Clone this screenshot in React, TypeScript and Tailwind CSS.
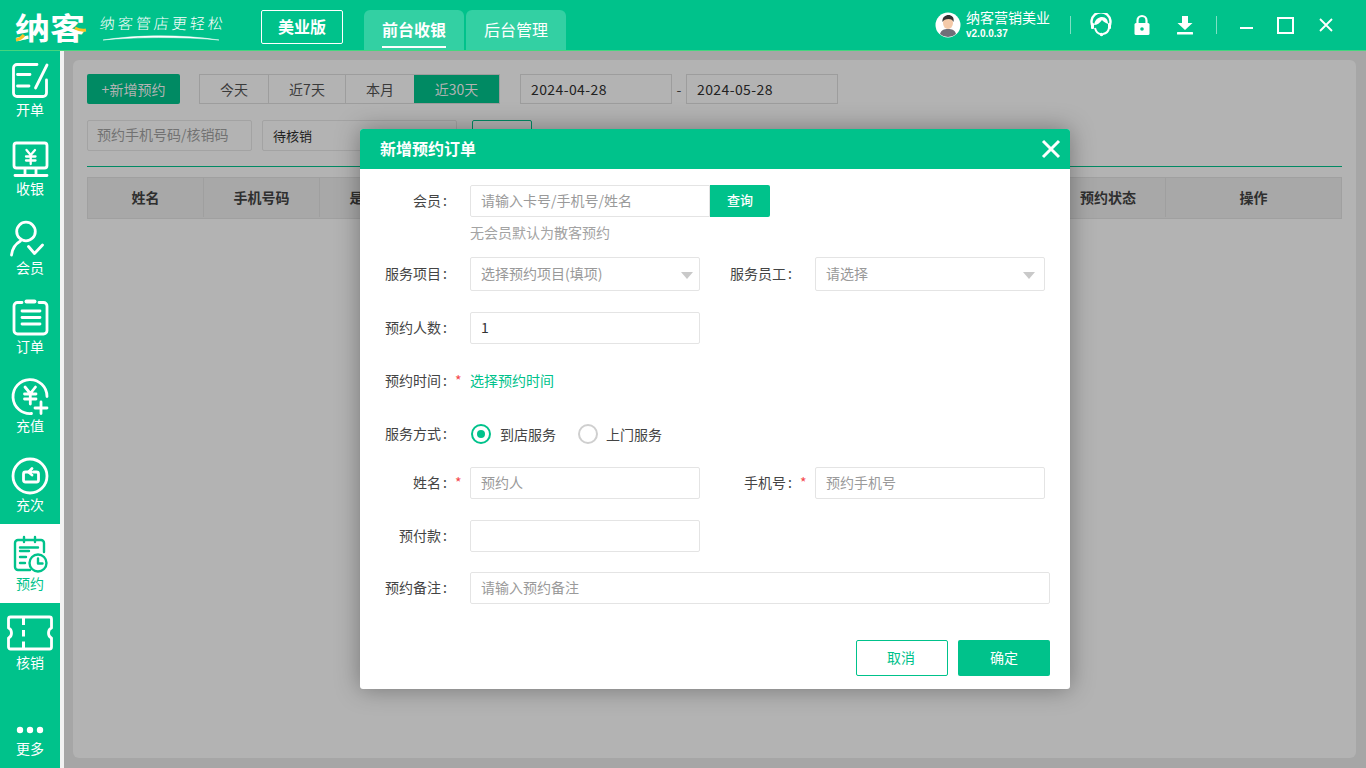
import { ReactNode } from "react";

const W = { fill: "none", stroke: "#fff", strokeWidth: 2.8, strokeLinecap: "round", strokeLinejoin: "round" } as const;
const G = { fill: "none", stroke: "#00c28b", strokeWidth: 2.4, strokeLinecap: "round", strokeLinejoin: "round" } as const;

const navItems: { label: string; icon: ReactNode; active?: boolean }[] = [
  {
    label: "开单",
    icon: (
      <g {...W}>
        <path d="M37 14.500H17a3.500 3.500 0 0 0-3.500 3.500V43a3.500 3.500 0 0 0 3.500 3.500H43a3.500 3.500 0 0 0 3.500-3.500V30" />
        <path d="M17.500 24.500H30M17.500 36H29M47 15 35.500 38" />
      </g>
    ),
  },
  {
    label: "收银",
    icon: (
      <g {...W}>
        <rect x="14" y="14" width="33" height="25" rx="2.500" />
        <path d="M25 40v6M36 40v6M15 46.500h32" />
        <path d="m26.500 21 4.200 5 4.300-5M26 27.500h9.500M26 31.500h9.500M30.700 26v9" strokeWidth="2.300" />
      </g>
    ),
  },
  {
    label: "会员",
    icon: (
      <g {...W}>
        <circle cx="26" cy="23.500" r="9.300" />
        <path d="M11.500 47c.8-6.800 4.500-11.500 9-14M28.500 38.500l6 7 8-8.500" />
      </g>
    ),
  },
  {
    label: "订单",
    icon: (
      <g {...W}>
        <path d="M22 15.500h-4.500a3.500 3.500 0 0 0-3.500 3.500v24.500a3.500 3.500 0 0 0 3.500 3.500h26a3.500 3.500 0 0 0 3.500-3.500V19a3.500 3.500 0 0 0-3.500-3.500H39" />
        <path d="M26.500 14.500h8" strokeWidth="4" />
        <path d="M22 24h18M22 30.500h18M22 37h18" />
      </g>
    ),
  },
  {
    label: "充值",
    icon: (
      <g {...W}>
        <path d="M47 30.500a17 17 0 1 0-15.500 17" />
        <path d="m25 21 5.300 6.500 5.200-6.500M24.500 28h11.500M24.500 33h11.500M30.300 28v10" />
        <path d="M41 36v11.500M35 42h12" strokeWidth="2.800" />
      </g>
    ),
  },
  {
    label: "充次",
    icon: (
      <g {...W}>
        <circle cx="30" cy="31" r="17" />
        <path d="M33.500 27h3a2 2 0 0 1 2 2v6a2 2 0 0 1-2 2h-11a2 2 0 0 1-2-2v-6a2 2 0 0 1 2-2H31" />
        <path d="m32 23.500-3.500 3.500 3.500 3" />
      </g>
    ),
  },
  {
    label: "预约",
    active: true,
    icon: (
      <g {...G}>
        <path d="M30 46H18a3 3 0 0 1-3-3V19a3 3 0 0 1 3-3h23a3 3 0 0 1 3 3v9" />
        <path d="M24 13v5M35 13v5M20 23.500h18M20 27h9M20 33h6M20 39h5" />
        <circle cx="38" cy="39" r="8.500" />
        <path d="M38 34.500V39.500h4.500" />
      </g>
    ),
  },
  {
    label: "核销",
    icon: (
      <g {...W}>
        <path d="M10.500 14h39a2 2 0 0 1 2 2v9c-2 .8-3 2.800-3 5s1 4.200 3 5v9a2 2 0 0 1-2 2h-39a2 2 0 0 1-2-2v-9c2-.8 3-2.800 3-5s-1-4.200-3-5v-9a2 2 0 0 1 2-2Z" />
        <path d="M23.500 15v7M23.500 27v6.500M23.500 38.500V45" strokeWidth="3" strokeLinecap="butt" />
      </g>
    ),
  },
];

function NavItem({ label, icon, active }: { label: string; icon: ReactNode; active?: boolean }) {
  return (
    <div className={active ? "h-[79px] w-[60px] bg-white text-[#00c28b]" : "h-[79px] w-[60px] text-white"}>
      <svg width="60" height="50" viewBox="0 0 60 50" className="block">
        {icon}
      </svg>
      <div className="-mt-px text-center text-[14px] leading-[20px]">{label}</div>
    </div>
  );
}

function Field({ placeholder, className, value }: { placeholder?: string; className: string; value?: string }) {
  return (
    <input
      readOnly
      placeholder={placeholder}
      defaultValue={value}
      className={`rounded-[2px] border border-[#e4e4e4] bg-white pb-[2px] pl-[10px] pr-[9px] text-[14px] text-[#333] outline-none placeholder:text-[#9a9a9a] ${className}`}
    />
  );
}

function Select({ text, className }: { text: string; className: string }) {
  return (
    <div className={`flex h-[34px] w-[230px] items-center justify-between rounded-[2px] border border-[#e4e4e4] bg-white pb-[2px] pl-[10px] text-[14px] text-[#999] ${className}`}>
      <span>{text}</span>
      <span className="mt-[4px] h-0 w-0 border-x-[6px] border-t-[7px] border-x-transparent border-t-[#c9c9c9]" />
    </div>
  );
}

function Label({ text, star }: { text: string; star?: boolean }) {
  return (
    <div className="flex w-[85px] shrink-0 items-center pb-[2px] text-[14px] text-[#444]">
      <span className="flex w-[62px] justify-end whitespace-nowrap">
        {text}
        <span className="ml-[2px] w-[4px]">:</span>
      </span>
      {star && <span className="ml-[8px] text-[#f5474b]">*</span>}
    </div>
  );
}

function Modal() {
  return (
    <div className="absolute left-[360px] top-[129px] flex h-[560px] w-[710px] flex-col overflow-hidden rounded-[3px] bg-white shadow-[0_0_24px_rgba(0,0,0,0.35)]">
      <div className="flex h-[40px] shrink-0 items-center justify-between bg-[#00c28b] pb-[2px] pl-[20px] pr-[9px]">
        <span className="text-[16px] font-bold text-white">新增预约订单</span>
        <svg width="20" height="20" viewBox="0 0 20 20" className="mt-[2px]">
          <path d="M2 2l16 16M18 2 2 18" stroke="#fff" strokeWidth="3" />
        </svg>
      </div>

      <div className="flex flex-1 flex-col pl-[25px] pt-[16px]">
        <div className="flex h-[32px] items-center">
          <Label text="会员" />
          <Field placeholder="请输入卡号/手机号/姓名" className="h-[32px] w-[240px] rounded-r-none" />
          <div className="flex h-[32px] w-[60px] items-center justify-center rounded-r-[2px] bg-[#00c28b] pb-[2px] text-[13px] font-medium text-white">查询</div>
        </div>
        <div className="ml-[85px] mt-[6px] h-[20px] text-[14px] leading-[18px] text-[#a3a3a3]">无会员默认为散客预约</div>

        <div className="mt-[14px] flex h-[34px] items-center">
          <Label text="服务项目" />
          <Select text="选择预约项目(填项)" className="pr-[6px]" />
          <div className="ml-[30px]">
            <Label text="服务员工" />
          </div>
          <Select text="请选择" className="pr-[9px]" />
        </div>

        <div className="mt-[21px] flex h-[32px] items-center">
          <Label text="预约人数" />
          <Field value="1" className="h-[32px] w-[230px]" />
        </div>

        <div className="mt-[27px] flex h-[20px] items-center">
          <Label text="预约时间" star />
          <span className="pb-[2px] text-[14px] text-[#00c28b]">选择预约时间</span>
        </div>

        <div className="mt-[32px] flex h-[22px] items-center">
          <Label text="服务方式" />
          <span className="ml-px flex h-[20px] w-[20px] items-center justify-center rounded-full border-2 border-[#00c28b]">
            <span className="h-[8px] w-[8px] rounded-full bg-[#00c28b]" />
          </span>
          <span className="ml-[9px] text-[14px] text-[#444]">到店服务</span>
          <span className="ml-[22px] h-[20px] w-[20px] rounded-full border-2 border-[#cfcfcf]" />
          <span className="ml-[8px] text-[14px] text-[#444]">上门服务</span>
        </div>

        <div className="mt-[22px] flex h-[32px] items-center">
          <Label text="姓名" star />
          <Field placeholder="预约人" className="h-[32px] w-[230px]" />
          <div className="ml-[30px]">
            <Label text="手机号" star />
          </div>
          <Field placeholder="预约手机号" className="h-[32px] w-[230px]" />
        </div>

        <div className="mt-[21px] flex h-[32px] items-center">
          <Label text="预付款" />
          <Field className="h-[32px] w-[230px]" />
        </div>

        <div className="mt-[20px] flex h-[32px] items-center">
          <Label text="预约备注" />
          <Field placeholder="请输入预约备注" className="h-[32px] w-[580px]" />
        </div>

        <div className="mt-[36px] flex justify-end gap-[10px] pr-[20px]">
          <div className="flex h-[36px] w-[92px] items-center justify-center rounded-[2px] border border-[#00c28b] pb-[2px] pr-[2px] text-[14px] text-[#00c28b]">取消</div>
          <div className="flex h-[36px] w-[92px] items-center justify-center rounded-[2px] bg-[#00c28b] pb-[2px] text-[14px] text-white">确定</div>
        </div>
      </div>
    </div>
  );
}

const columns = [
  { t: "姓名", w: "w-[116px]" },
  { t: "手机号码", w: "w-[116px]" },
  { t: "是否到店", w: "w-[116px]" },
  { t: "", w: "flex-1" },
  { t: "预约状态", w: "w-[115px]" },
  { t: "操作", w: "w-[175px]" },
];

function Backdrop() {
  return (
    <div className="flex-1 bg-[#a6a6a6] pl-[9px] pr-[10px] pt-[9px] pb-[10px]">
      <div className="flex h-full flex-col rounded-[6px] bg-[#b3b3b3] px-[14px] pt-[14px]">
        <div className="flex items-center">
          <div className="flex h-[30px] w-[93px] items-center justify-center rounded-[2px] bg-[#008a63] text-[14px] text-[#b3b3b3]">+新增预约</div>
          <div className="ml-[19px] flex h-[30px] border border-[#9d9d9d] text-[14px] text-[#3a3a3a]">
            <div className="flex w-[69px] items-center justify-center border-r border-[#9d9d9d]">今天</div>
            <div className="flex w-[77px] items-center justify-center border-r border-[#9d9d9d]">近7天</div>
            <div className="flex w-[68px] items-center justify-center">本月</div>
            <div className="flex w-[85px] items-center justify-center bg-[#008a63] text-[#b3b3b3]">近30天</div>
          </div>
          <div className="ml-[20px] flex h-[30px] w-[152px] items-center border border-[#9d9d9d] pl-[10px] text-[14px] tracking-[0.4px] text-[#222]">2024-04-28</div>
          <div className="flex w-[14px] justify-center text-[14px] text-[#333]">-</div>
          <div className="flex h-[30px] w-[152px] items-center border border-[#9d9d9d] pl-[10px] text-[14px] tracking-[0.4px] text-[#222]">2024-05-28</div>
        </div>

        <div className="mt-[16px] flex items-center">
          <div className="flex h-[31px] w-[165px] items-center rounded-[2px] border border-[#a3a3a3] pb-[2px] pl-[9px] text-[14px] text-[#727272]">预约手机号码/核销码</div>
          <div className="ml-[10px] flex h-[31px] w-[195px] items-center rounded-[2px] border border-[#a3a3a3] pl-[10px] text-[13px] text-[#222]">待核销</div>
          <div className="ml-[15px] h-[31px] w-[60px] rounded-[2px] border border-[#008a63]" />
        </div>

        <div className="mt-[15px] h-px bg-[#008a63]" />

        <div className="mt-[10px] flex h-[42px] border border-[#a0a0a0] bg-[#a8a8a8] pb-[1px] text-[14px] font-bold text-[#2f2f2f]">
          {columns.map((c, i) => (
            <div key={i} className={`flex shrink-0 items-center justify-center border-r border-[#9f9f9f] last:border-r-0 ${c.w}`}>
              {c.t}
            </div>
          ))}
        </div>
      </div>
    </div>
  );
}

export default function App() {
  return (
    <div className="relative flex h-[768px] w-[1366px] flex-col overflow-hidden font-['Noto_Sans_CJK_SC','Liberation_Sans',sans-serif]">
      <header className="relative z-10 flex h-[51px] shrink-0 items-start border-b border-[#45d67e] bg-[#00c28b] text-white">
        <div className="relative ml-[15px] mt-[7px] h-[38px] w-[72px] whitespace-nowrap">
          <div className="origin-left scale-x-[1.17] text-[30px] font-bold leading-[38px]">纳客</div>
          <svg width="72" height="38" viewBox="0 0 72 38" className="absolute left-0 top-0">
            <path d="M1 33q5-1 8-5" stroke="#f7c325" strokeWidth="3" fill="none" />
            <path d="M60 21q5 3 11 2" stroke="#f7c325" strokeWidth="3" fill="none" />
          </svg>
        </div>
        <div className="relative ml-[13px] mt-[11px] h-[32px] w-[126px]">
          <div className="-skew-x-6 whitespace-nowrap text-[15px] font-light leading-[24px] tracking-[3px]">纳客管店更轻松</div>
          <svg width="126" height="12" viewBox="0 0 126 12" className="absolute left-0 top-[23px]">
            <path d="M3 6C35 1 80 0 119 6C80 2.500 35 3 3 6Z" fill="#fff" stroke="#fff" strokeWidth=".5" />
          </svg>
        </div>
        <div className="ml-[35px] mt-[10px] flex h-[34px] w-[82px] items-center justify-center rounded-[2px] border border-white pb-[2px] text-[16px] font-bold">美业版</div>
        <div className="ml-[21px] mt-[10px] flex h-[40px] w-[100px] justify-center rounded-t-[6px] bg-[#33d0a3]">
          <span className="h-[38px] border-b-2 border-white text-[16px] font-bold leading-[38px]">前台收银</span>
        </div>
        <div className="ml-[2px] mt-[10px] flex h-[40px] w-[100px] items-center justify-center rounded-t-[6px] bg-[#33d0a3] pb-[2px] text-[16px]">后台管理</div>

        <div className="ml-auto flex h-full items-center">
          <svg width="26" height="26" viewBox="0 0 26 26">
            <circle cx="13" cy="13" r="12.500" fill="#fff" />
            <path d="M5 22c1-4 4-5 8-5s7 1 8 5a12 12 0 0 1-16 0Z" fill="#6f6f78" />
            <ellipse cx="13" cy="11" rx="5" ry="6" fill="#f4c9a8" />
            <path d="M7.500 10c-.5-5 3-7 6-7s6 2 5 7c-1-2-2-3-5-3s-5 1-6 3Z" fill="#333" />
          </svg>
          <div className="ml-[5px] w-[90px]">
            <div className="whitespace-nowrap text-[14px] leading-[17px]">纳客营销美业</div>
            <div className="font-['Liberation_Sans',sans-serif] text-[10px] font-bold leading-[15px]">v2.0.0.37</div>
          </div>
          <div className="ml-[14px] h-[18px] w-px bg-[#7fe0c4]" />
          <svg width="22" height="24" viewBox="0 0 22 24" className="ml-[19px]">
            <path d="M3 14A9.500 9.500 0 1 1 19 14" fill="none" stroke="#fff" strokeWidth="2.400" />
            <path d="M4 12C5 6 9 4 12 4c4 0 6 3 6 7-3-1-5-3-6-4-2 3-5 5-8 5Z" fill="#fff" />
            <rect x="1" y="10" width="3" height="6" rx="1" fill="#fff" />
            <rect x="18" y="10" width="3" height="6" rx="1" fill="#fff" />
            <path d="M5 15c1 4 3.500 6 6 6M19 15c-.5 3-3 5.500-6 6" fill="none" stroke="#fff" strokeWidth="2" />
            <circle cx="11.500" cy="21.500" r="1.800" fill="#fff" />
          </svg>
          <svg width="18" height="22" viewBox="0 0 18 22" className="ml-[21px]">
            <path d="M4.500 10V6.500a4.500 4.500 0 0 1 9 0V10" fill="none" stroke="#fff" strokeWidth="2.200" />
            <rect x="1.500" y="9" width="15" height="12" rx="1.500" fill="#fff" />
            <circle cx="9" cy="15" r="1.800" fill="#00c28b" />
          </svg>
          <svg width="18" height="20" viewBox="0 0 18 20" className="ml-[25px]">
            <path d="M6 1h6v7h4.500L9 15 1.500 8H6Z" fill="#fff" />
            <rect x="1" y="17" width="16" height="2.500" rx=".5" fill="#fff" />
          </svg>
          <div className="ml-[22px] h-[18px] w-px bg-[#7fe0c4]" />
          <div className="ml-[23px] h-[2px] w-[13px] translate-y-[3px] bg-white" />
          <div className="ml-[24px] h-[17px] w-[17px] border-2 border-white" />
          <svg width="14" height="14" viewBox="0 0 14 14" className="ml-[25px] mr-[33px]">
            <path d="M1 1l12 12M13 1 1 13" stroke="#fff" strokeWidth="1.800" />
          </svg>
        </div>
      </header>

      <div className="flex min-h-0 flex-1">
        <nav className="-mt-px flex w-[64px] shrink-0 flex-col border-r-[4px] border-[#f2f2f2] bg-[#00c28b]">
          {navItems.map((n) => (
            <NavItem key={n.label} {...n} />
          ))}
          <div className="mt-auto">
            <NavItem
              label="更多"
              icon={
                <g fill="#fff">
                  <circle cx="20" cy="41" r="3.200" />
                  <circle cx="30" cy="41" r="3.200" />
                  <circle cx="40" cy="41" r="3.200" />
                </g>
              }
            />
          </div>
        </nav>
        <Backdrop />
      </div>

      <Modal />
    </div>
  );
}
